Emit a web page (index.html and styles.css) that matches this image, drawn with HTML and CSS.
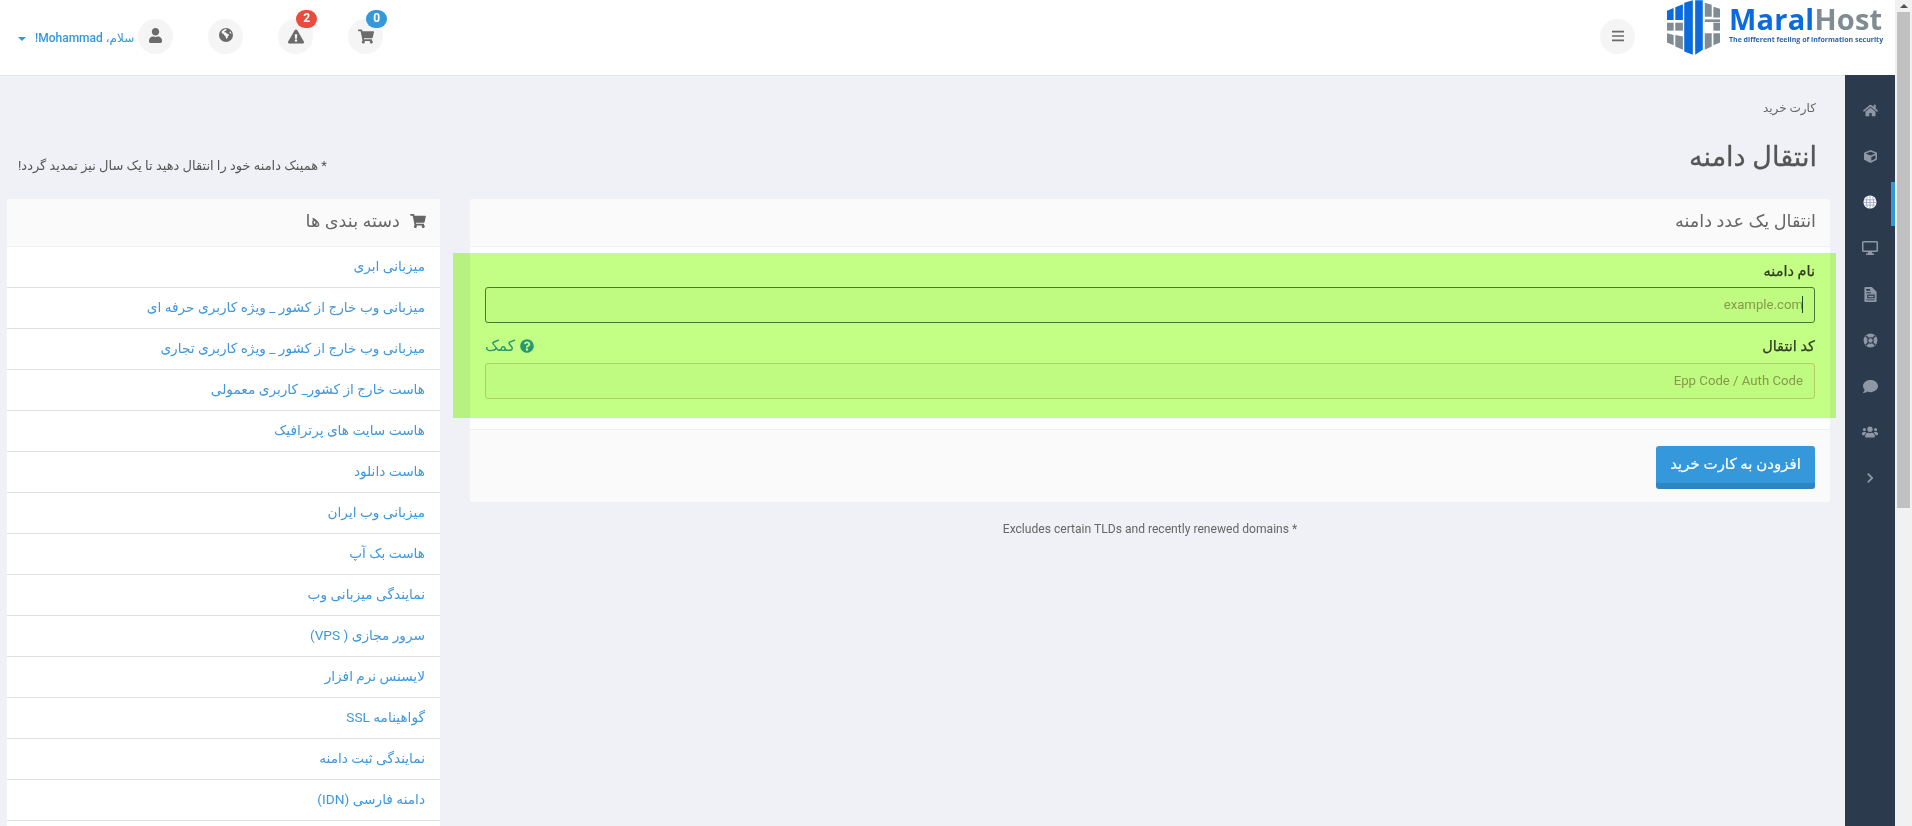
FILE: index.html
```html
<!DOCTYPE html>
<html lang="fa">
<head>
<meta charset="utf-8">
<title>انتقال دامنه</title>
<link rel="stylesheet" href="styles.css">
</head>
<body>
<div class="app" dir="rtl">
  <header class="topbar">
    <div class="brandgroup">
      <a class="logo" dir="ltr">
        <svg class="logomark" viewBox="320 0 160 165" aria-hidden="true">
          <g fill="#0b6bdc">
            <polygon points="320,32 340,24 340,60 320,60"/>
            <polygon points="345,21 368,12 368,60 345,60"/>
            <polygon points="372,8 398,0 398,165 372,155"/>
            <polygon points="405,0 428,0 428,150 405,165"/>
          </g>
          <g fill="#7f8c94">
            <polygon points="320,68 340,68 340,92 320,92"/>
            <polygon points="320,100 340,105 340,136 320,128"/>
            <polygon points="345,68 368,68 368,92 345,92"/>
            <polygon points="345,105 368,110 368,150 345,140"/>
            <polygon points="434,8 455,14 455,50 434,50"/>
            <polygon points="434,58 480,58 480,66 434,66"/>
            <polygon points="434,100 455,100 455,140 434,150"/>
            <polygon points="460,20 480,26 480,52 460,52"/>
            <polygon points="460,68 480,68 480,92 460,92"/>
            <polygon points="460,100 480,100 480,128 460,136"/>
          </g>
        </svg>
        <span class="logotext">
          <span class="logoname"><span class="maral">Maral</span><span class="host">Host</span></span>
          <span class="logotag">The different feeling of information security</span>
        </span>
      </a>
      <button class="circle" aria-label="menu">
        <svg class="ic ic-bars" viewBox="0 0 16 14"><path d="M1 1h14v2H1zM1 6h14v2H1zM1 11h14v2H1z"/></svg>
      </button>
    </div>
    <div class="usergroup">
      <a class="circle">
        <svg class="ic" viewBox="0 0 576 512"><path d="M528.12 301.319l47.273-208C578.806 78.301 567.391 64 551.99 64H159.208l-9.166-44.81C147.758 8.021 137.93 0 126.529 0H24C10.745 0 0 10.745 0 24v16c0 13.255 10.745 24 24 24h69.883l70.248 343.435C147.325 417.1 136 435.222 136 456c0 30.928 25.072 56 56 56s56-25.072 56-56c0-15.674-6.447-29.835-16.824-40h209.647C430.447 426.165 424 440.326 424 456c0 30.928 25.072 56 56 56s56-25.072 56-56c0-22.172-12.888-41.332-31.579-50.405l5.517-24.276c3.413-15.018-8.002-29.319-23.403-29.319H218.117l-6.545-32h293.145c11.206 0 20.92-7.754 23.403-18.681z"/></svg>
        <span class="badge badge-blue">0</span>
      </a>
      <a class="circle">
        <svg class="ic" viewBox="0 0 576 512"><path d="M569.517 440.013C587.975 472.007 564.806 512 527.94 512H48.054c-36.937 0-59.999-40.055-41.577-71.987L246.423 23.985c18.467-32.009 64.72-31.951 83.154 0l239.94 416.028zM288 354c-25.405 0-46 20.595-46 46s20.595 46 46 46 46-20.595 46-46-20.595-46-46-46zm-43.673-165.346l7.418 136c.347 6.364 5.609 11.346 11.982 11.346h48.546c6.373 0 11.635-4.982 11.982-11.346l7.418-136c.375-6.874-5.098-12.654-11.982-12.654h-63.383c-6.884 0-12.356 5.78-11.981 12.654z"/></svg>
        <span class="badge badge-red">2</span>
      </a>
      <a class="circle">
        <svg class="ic ic-globe" viewBox="0 0 16 16"><path fill-rule="evenodd" d="M8 1a7 7 0 1 1 0 14A7 7 0 0 1 8 1zM6.5 2.6L5 3.2 3.6 4.6l.3 1.6 1.7.9.7 1.5 1.2.5.3 1.7.8 1.2 1-1.2.4-1.6 1-1-.6-1.2-1.6-.5-1-1.2-1 .3-.6-.8.8-.9 1.3-.4.2-1.2-1.2-.6zM12.6 4.6l-1.2.4.5 1.2 1.6.5z"/></svg>
      </a>
      <a class="circle">
        <svg class="ic ic-user" viewBox="0 0 448 512"><path d="M224 256c70.7 0 128-57.3 128-128S294.7 0 224 0 96 57.3 96 128s57.3 128 128 128zm89.6 32h-16.7c-22.2 10.2-46.9 16-72.9 16s-50.6-5.8-72.9-16h-16.7C60.2 288 0 348.2 0 422.4V464c0 26.5 21.5 48 48 48h352c26.5 0 48-21.5 48-48v-41.6c0-74.2-60.2-134.4-134.4-134.4z"/></svg>
      </a>
      <a class="username">سلام، Mohammad!</a>
      <span class="caret"></span>
    </div>
  </header>

  <div class="below">
    <nav class="sidenav">
      <a class="navitem"><svg class="nav-ic" viewBox="0 0 576 512"><path d="M280.37 148.26L96 300.11V464a16 16 0 0 0 16 16l112.06-.29a16 16 0 0 0 15.92-16V368a16 16 0 0 1 16-16h64a16 16 0 0 1 16 16v95.64a16 16 0 0 0 16 16.05L464 480a16 16 0 0 0 16-16V300L295.67 148.26a12.19 12.19 0 0 0-15.3 0zM571.6 251.47L488 182.56V44.05a12 12 0 0 0-12-12h-56a12 12 0 0 0-12 12v72.61L318.47 43a48 48 0 0 0-61 0L4.34 251.47a12 12 0 0 0-1.6 16.9l25.5 31A12 12 0 0 0 45.15 301l235.22-193.74a12.19 12.19 0 0 1 15.3 0L530.9 301a12 12 0 0 0 16.9-1.6l25.5-31a12 12 0 0 0-1.7-16.93z"/></svg></a>
      <a class="navitem"><svg class="nav-ic nav-sm" viewBox="0 0 512 512"><path d="M239.1 6.3l-208 78c-18.7 7-31.1 25-31.1 45v225.1c0 18.2 10.3 34.8 26.5 42.9l208 104c13.5 6.8 29.4 6.8 42.9 0l208-104c16.3-8.1 26.5-24.8 26.5-42.9V129.3c0-20-12.4-37.9-31.1-44.9l-208-78C262 2.2 250 2.2 239.1 6.3zM256 68.4l192 72v1.1l-192 78-192-78v-1.1l192-72zm32 356V275.5l160-65v133.9l-160 80z"/></svg></a>
      <a class="navitem active"><svg class="nav-ic nav-globe" viewBox="0 0 16 16"><circle cx="8" cy="8" r="7.5"/><path class="grid" d="M1.5 5.5h13M1 8.500h14M2 11.500h12M8 1v14M5 2c-1.500 3.500-1.500 8.500 0 12M11 2c1.500 3.500 1.500 8.500 0 12"/></svg></a>
      <a class="navitem"><svg class="nav-ic nav-wide" viewBox="0 0 16 14"><path fill-rule="evenodd" d="M1.500 0h13A1.500 1.500 0 0 1 16 1.500v8a1.500 1.500 0 0 1-1.500 1.500H10l.4 1.500H12V14H4v-1.500h1.600L6 11H1.500A1.500 1.500 0 0 1 0 9.500v-8A1.500 1.500 0 0 1 1.500 0zM1.500 1.500v8h13v-8z"/></svg></a>
      <a class="navitem"><svg class="nav-ic nav-sm" viewBox="0 0 13 16"><path fill-rule="evenodd" d="M1 0h7l5 5v10a1 1 0 0 1-1 1H1a1 1 0 0 1-1-1V1a1 1 0 0 1 1-1zM2 2v2h4V2zM2 5.500v1.200h5V5.500zM3 8v4h8V8zM4.200 9.200h5.600v1.600H4.200zM2 13.200v1h9v-1z"/></svg></a>
      <a class="navitem"><svg class="nav-ic nav-ring" viewBox="0 0 16 16"><circle cx="8" cy="8" r="7.400"/><path class="ring-gap" d="M3 3l2.800 2.800M13 3l-2.800 2.800M3 13l2.800-2.800M13 13l-2.800-2.800"/><circle class="ring-gap ring-core" cx="8" cy="8" r="2.900"/></svg></a>
      <a class="navitem"><svg class="nav-ic" viewBox="0 0 512 512"><path d="M256 32C114.600 32 0 125.100 0 240c0 49.600 21.400 95 57 130.700C44.500 421.100 2.700 466 2.200 466.500c-2.200 2.300-2.800 5.700-1.500 8.700S4.800 480 8 480c66.300 0 116-31.800 140.600-51.400 32.700 12.300 69 19.400 107.400 19.400 141.400 0 256-93.100 256-208S397.400 32 256 32z"/></svg></a>
      <a class="navitem"><svg class="nav-ic nav-wide" viewBox="0 0 640 512"><path d="M96 224c35.300 0 64-28.700 64-64s-28.700-64-64-64-64 28.700-64 64 28.700 64 64 64zm448 0c35.300 0 64-28.700 64-64s-28.700-64-64-64-64 28.700-64 64 28.700 64 64 64zm32 32h-64c-17.600 0-33.500 7.100-45.100 18.600 40.300 22.100 68.900 62 75.100 109.400h66c17.700 0 32-14.300 32-32v-32c0-35.300-28.700-64-64-64zm-256 0c61.900 0 112-50.100 112-112S381.900 32 320 32 208 82.100 208 144s50.100 112 112 112zm76.800 32h-8.300c-20.800 10-43.900 16-68.500 16s-47.600-6-68.500-16h-8.300C179.600 288 128 339.600 128 403.200V432c0 26.500 21.500 48 48 48h288c26.500 0 48-21.500 48-48v-28.800c0-63.600-51.600-115.200-115.200-115.200zm-223.700-13.400C161.500 263.100 145.600 256 128 256H64c-35.300 0-64 28.700-64 64v32c0 17.700 14.300 32 32 32h65.900c6.300-47.400 34.900-87.300 75.200-109.400z"/></svg></a>
      <a class="navitem"><svg class="nav-ic nav-chev" viewBox="0 0 8 12"><path d="M1.500 0L7.500 6l-6 6L0 10.500 4.500 6 0 1.500z"/></svg></a>
    </nav>

    <main class="content">
      <div class="pagehead">
        <div class="crumb">کارت خرید</div>
        <div class="titlerow">
          <h1 class="title">انتقال دامنه</h1>
          <p class="promo">* همینک دامنه خود را انتقال دهید تا یک سال نیز تمدید گردد!</p>
        </div>
      </div>
      <div class="columns">
        <div class="maincol">
          <section class="panel">
            <h2 class="panelhead">انتقال یک عدد دامنه</h2>
            <div class="panelbody">
              <div class="field">
                <div class="labelrow"><label class="label">نام دامنه</label></div>
                <div class="inputwrap focused"><input class="input" placeholder="example.com"></div>
              </div>
              <div class="field">
                <div class="labelrow">
                  <label class="label">کد انتقال</label>
                  <a class="help">
                    <svg class="help-ic" viewBox="0 0 512 512"><path d="M504 256c0 136.997-111.043 248-248 248S8 392.997 8 256C8 119.083 119.043 8 256 8s248 111.083 248 248zM262.655 90c-54.497 0-89.255 22.957-116.549 63.758-3.536 5.286-2.353 12.415 2.715 16.258l34.699 26.310c5.205 3.947 12.621 3.008 16.665-2.122 17.864-22.658 30.113-35.797 57.303-35.797 20.429 0 45.698 13.148 45.698 32.958 0 14.976-12.363 22.667-32.534 33.976C247.128 238.528 216 254.941 216 296v4c0 6.627 5.373 12 12 12h56c6.627 0 12-5.373 12-12v-1.333c0-28.462 83.186-29.647 83.186-106.667 0-58.002-60.165-102-116.531-102zM256 338c-25.365 0-46 20.635-46 46 0 25.364 20.635 46 46 46s46-20.636 46-46c0-25.365-20.635-46-46-46z"/></svg>
                    کمک
                  </a>
                </div>
                <div class="inputwrap"><input class="input" placeholder="Epp Code / Auth Code"></div>
              </div>
            </div>
            <div class="panelfoot"><button class="addbtn">افزودن به کارت خرید</button></div>
          </section>
          <p class="footnote">* Excludes certain TLDs and recently renewed domains</p>
        </div>
        <aside class="catpanel">
          <h2 class="panelhead">
            <svg class="head-ic" viewBox="0 0 576 512"><path d="M528.12 301.319l47.273-208C578.806 78.301 567.391 64 551.99 64H159.208l-9.166-44.81C147.758 8.021 137.93 0 126.529 0H24C10.745 0 0 10.745 0 24v16c0 13.255 10.745 24 24 24h69.883l70.248 343.435C147.325 417.1 136 435.222 136 456c0 30.928 25.072 56 56 56s56-25.072 56-56c0-15.674-6.447-29.835-16.824-40h209.647C430.447 426.165 424 440.326 424 456c0 30.928 25.072 56 56 56s56-25.072 56-56c0-22.172-12.888-41.332-31.579-50.405l5.517-24.276c3.413-15.018-8.002-29.319-23.403-29.319H218.117l-6.545-32h293.145c11.206 0 20.920-7.754 23.403-18.681z"/></svg>
            دسته بندی ها
          </h2>
          <ul class="catlist">
            <li class="catrow">میزبانی ابری</li>
            <li class="catrow">میزبانی وب خارج از کشور _ ویژه کاربری حرفه ای</li>
            <li class="catrow">میزبانی وب خارج از کشور _ ویژه کاربری تجاری</li>
            <li class="catrow">هاست خارج از کشور_ کاربری معمولی</li>
            <li class="catrow">هاست سایت های پرترافیک</li>
            <li class="catrow">هاست دانلود</li>
            <li class="catrow">میزبانی وب ایران</li>
            <li class="catrow">هاست بک آپ</li>
            <li class="catrow">نمایندگی میزبانی وب</li>
            <li class="catrow">سرور مجازی ( VPS)</li>
            <li class="catrow">لایسنس نرم افزار</li>
            <li class="catrow">گواهینامه SSL</li>
            <li class="catrow">نمایندگی ثبت دامنه</li>
            <li class="catrow">دامنه فارسی (IDN)</li>
          </ul>
        </aside>
      </div>
      <div class="marker"></div>
    </main>
  </div>
</div>
<div class="scrollbar">
  <span class="scrollarrow"></span>
  <span class="scrollthumb"></span>
</div>
</body>
</html>
```
FILE: styles.css
```css
* { box-sizing: border-box; }
html, body { margin: 0; height: 100%; overflow: hidden; }
body {
  display: flex;
  font-family: Roboto, "DejaVu Sans", sans-serif;
  font-size: 12px;
  color: #555;
  background: #f0f1f6;
}
.app { flex: 1; min-width: 0; display: flex; flex-direction: column; height: 100vh; }

/* top bar */
.topbar {
  height: 75px;
  flex: none;
  background: #fff;
  display: flex;
  justify-content: space-between;
  align-items: center;
  padding: 0 10px 3px 18px;
}
.brandgroup { display: flex; align-items: center; align-self: flex-start; gap: 32px; }
.logo { display: flex; align-items: flex-start; gap: 9px; height: 55px; }
.logomark { width: 53px; height: 55px; display: block; }
.logotext { display: flex; flex-direction: column; width: 156px; padding-top: 3px; }
.logoname { font-family: "Open Sans", sans-serif; font-weight: 700; font-size: 29px; line-height: 32px; letter-spacing: .2px; white-space: nowrap; }
.maral { color: #0b6bdc; }
.host { color: #7f8c94; }
.logotag { font-family: "Open Sans", sans-serif; font-weight: 700; font-size: 7px; line-height: 10px; color: #2b64ad; white-space: nowrap; }
.brandgroup .circle { margin-top: 18px; }

.usergroup { display: flex; align-items: center; }
.circle {
  position: relative;
  width: 35px;
  height: 35px;
  padding: 0;
  border: 0;
  border-radius: 50%;
  background: #f5f5f5;
  display: flex;
  align-items: center;
  justify-content: center;
  margin-inline-end: 35px;
}
.usergroup .circle:nth-child(4) { margin-inline-end: 4px; }
.brandgroup .circle { margin-inline-end: 0; }
.ic { width: 16px; height: 15px; fill: #6b6b6b; display: block; }
.ic-bars { width: 14px; height: 12px; margin-bottom: 2px; }
.ic-globe { width: 16px; height: 16px; margin-bottom: 3px; }
.ic-user { width: 13px; height: 15px; margin-bottom: 2px; }
.badge {
  position: absolute;
  top: -9px;
  left: 18px;
  width: 21px;
  height: 18px;
  border-radius: 9px;
  color: #fff;
  font-weight: 700;
  font-size: 12px;
  line-height: 17px;
  text-align: center;
}
.badge-blue { background: #3498db; }
.badge-red { background: #e74c3c; }
.username { color: #3498db; font-size: 12px; font-weight: 500; white-space: nowrap; margin-inline-end: 9px; margin-top: 3px; }
.caret { width: 0; height: 0; border: 4px solid transparent; border-top: 4px solid #3498db; border-bottom: 0; margin-top: 5px; }

/* layout under bar */
.below { flex: 1; min-height: 0; display: flex; }
.sidenav { width: 50px; flex: none; background: #2c3a4d; padding-top: 12px; display: flex; flex-direction: column; }
.navitem { position: relative; height: 46px; flex: none; display: flex; align-items: center; justify-content: center; }
.nav-ic { width: 15px; height: 15px; fill: #8d97a5; display: block; }
.nav-wide { width: 16px; height: 14px; }
.nav-sm { width: 13px; height: 15px; }
.nav-chev { width: 7px; height: 10px; }
.nav-globe { fill: #fff; width: 14px; height: 14px; }
.nav-globe .grid { fill: none; stroke: #7486b0; stroke-width: .7; }
.ring-gap { fill: none; stroke: #2c3a4d; stroke-width: 1.6; }
.ring-core { fill: #8d97a5; stroke-width: 1.1; }
.navitem.active::after { content: ""; position: absolute; right: 0; top: 3px; width: 4px; height: 44px; background: #3498db; }

.content {
  position: relative;
  flex: 1;
  min-width: 0;
  display: flex;
  flex-direction: column;
  border-top: 1px solid #e6e6e6;
  padding: 0 15px 0 7px;
}
.pagehead { flex: none; height: 123px; padding: 22px 0 0 11px; }
.crumb { line-height: 20px; color: #666; font-size: 12px; padding-right: 14px; }
.titlerow { display: flex; justify-content: space-between; align-items: flex-end; margin-top: 19px; padding-right: 13px; height: 40px; }
.title { margin: 0; font-size: 27px; font-weight: 400; line-height: 40px; color: #555; -webkit-text-stroke: .3px #555; white-space: nowrap; }
.promo { margin: 0 0 1px; font-size: 13px; line-height: 20px; color: #555; }

.columns { flex: 1; min-height: 0; display: flex; gap: 30px; }
.maincol { flex: 1; min-width: 0; }
.catpanel { width: 433px; flex: none; background: #fff; border-radius: 3px 3px 0 0; }

.panel { background: #fff; border-radius: 3px; }
.panelhead {
  margin: 0;
  height: 48px;
  padding: 0 14px 3px;
  display: flex;
  align-items: center;
  gap: 10px;
  font-size: 17.7px;
  font-weight: 400;
  color: #666;
  background: #fafafa;
  border-bottom: 1px solid #f0f0f0;
  border-radius: 3px 3px 0 0;
}
.head-ic { width: 16px; height: 14px; fill: #666; flex: none; }

.panelbody { padding: 14px 15px 30px; }
.field + .field { margin-top: 13px; }
.labelrow { display: flex; justify-content: space-between; align-items: center; height: 20px; margin-bottom: 6px; }
.field + .field .labelrow { margin-bottom: 7px; }
.label { font-size: 14.5px; font-weight: 400; color: #3a3a3a; -webkit-text-stroke: .25px #3a3a3a; }
.help { display: flex; align-items: center; gap: 5px; color: #3498db; font-size: 15.5px; }
.help-ic { width: 14px; height: 14px; fill: #3498db; }
.inputwrap { position: relative; }
.input {
  display: block;
  width: 100%;
  height: 36px;
  border: 1px solid #e8cfc8;
  border-radius: 3px;
  background: #fafafa;
  padding: 0 11px 2px;
  font-family: Roboto, "DejaVu Sans", sans-serif;
  font-size: 13.2px;
  direction: rtl;
  outline: 0;
}
.input::placeholder { color: #b09a90; opacity: 1; }
.focused .input { border-color: #5c7a66; }
.focused::after { content: ""; position: absolute; right: 12px; top: 9px; width: 1px; height: 17px; background: #2a4a3c; }

.panelfoot { background: #fafafa; border-top: 1px solid #f0f0f0; padding: 16px 15px 13px; border-radius: 0 0 3px 3px; }
.addbtn {
  display: block;
  width: 159px;
  height: 43px;
  padding: 0 0 2px;
  background: #3498db;
  color: #fff;
  border: 0;
  border-bottom: 6px solid #2e86c1;
  border-radius: 3px;
  font-family: Roboto, "DejaVu Sans", sans-serif;
  font-size: 15px;
  font-weight: 400;
  -webkit-text-stroke: .2px #fff;
}
.footnote { margin: 17px 0 0; line-height: 20px; text-align: center; color: #666; font-size: 12.1px; }

.catlist { list-style: none; margin: 0; padding: 0; }
.catrow { height: 41px; line-height: 39px; padding: 0 15px; border-bottom: 1px solid #e0e0e0; color: #3f97dc; font-size: 13.7px; white-space: nowrap; }

/* highlighter stroke laid over the form */
.marker {
  position: absolute;
  left: 453px;
  top: 177px;
  width: 1383px;
  height: 165px;
  background: #c3ff84;
  mix-blend-mode: multiply;
  pointer-events: none;
}

/* browser scrollbar */
.scrollbar { width: 17px; flex: none; background: #f1f1f1; display: flex; flex-direction: column; align-items: center; height: 100vh; }
.scrollarrow { width: 0; height: 0; border: 4px solid transparent; border-bottom: 4px solid #505050; border-top: 0; margin: 4px 0 4px; }
.scrollthumb { width: 13px; height: 496px; background: #c1c1c1; }
```
